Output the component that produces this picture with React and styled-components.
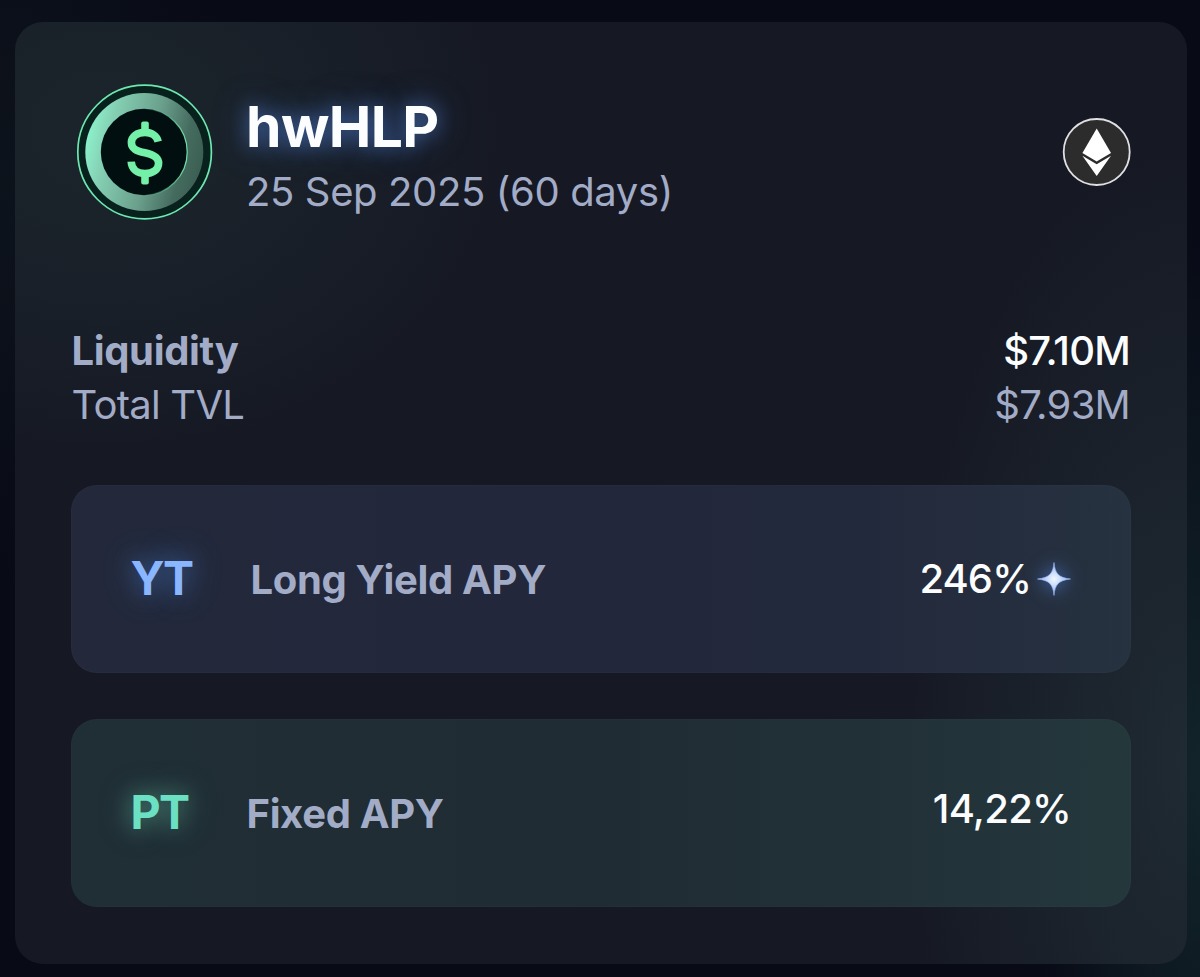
import React from "react";
import styled, { createGlobalStyle } from "styled-components";

const GlobalStyle = createGlobalStyle`
  *, *::before, *::after { box-sizing: border-box; }
  html, body { margin: 0; padding: 0; }
  body {
    background: #080b16;
    font-family: Inter, "Liberation Sans", sans-serif;
    -webkit-font-smoothing: antialiased;
  }
`;

const Page = styled.main`
  width: 1200px;
  height: 977px;
  padding: 22px 13px 13px 15px;
  overflow: hidden;
  background:
    radial-gradient(ellipse 170px 560px at 1200px 780px, rgba(28, 62, 62, 0.5), transparent 100%),
    radial-gradient(ellipse 260px 420px at 0 180px, rgba(24, 40, 40, 0.3), transparent 100%),
    #080a16;
`;

const Card = styled.section`
  display: flex;
  flex-direction: column;
  width: 1172px;
  height: 942px;
  padding: 62px 56px 57px;
  border-radius: 28px;
  background:
    radial-gradient(ellipse 400px 320px at 90px 110px, rgba(34, 52, 54, 0.42), rgba(34, 52, 54, 0.26) 50%, transparent 100%),
    radial-gradient(ellipse 280px 620px at 1172px 740px, rgba(44, 66, 70, 0.42), transparent 100%),
    #161924;
`;

const Header = styled.header`
  display: flex;
  align-items: flex-start;
  height: 240px;
  padding-left: 5px;
`;

const CoinIcon = styled.svg`
  flex: none;
  width: 138px;
  height: 138px;
  margin-top: -1px;
`;

const Heading = styled.div`
  flex: 1;
  display: flex;
  flex-direction: column;
  gap: 4px;
  margin-left: 32px;
  padding-top: 9px;
`;

const Title = styled.h1`
  margin: 0;
  font-size: 57px;
  line-height: 68px;
  font-weight: 750;
  letter-spacing: ${(p) => p.$tracking}px;
  color: #fbfdff;
  text-shadow: 0 0 18px rgba(84, 130, 210, 0.5), 0 0 32px rgba(76, 120, 205, 0.6);
`;

const Text = styled.span`
  margin: 0;
  font-size: 40px;
  line-height: 54px;
  font-weight: ${(p) => p.$weight || 400};
  letter-spacing: ${(p) => p.$tracking || 0}px;
  color: ${(p) => p.$color || "#a2acc7"};
  white-space: nowrap;
`;

const EthIcon = styled.svg`
  flex: none;
  width: 70px;
  height: 70px;
  margin-top: 33px;
  margin-right: -0.5px;
`;

const Stats = styled.dl`
  display: flex;
  flex-direction: column;
  margin: 0 1px 53px 0.5px;
`;

const StatRow = styled.div`
  display: flex;
  justify-content: space-between;
`;

const Rates = styled.div`
  display: flex;
  flex-direction: column;
  gap: 46px;
`;

const RateCard = styled.div`
  display: flex;
  align-items: center;
  height: 188px;
  padding: 0 60px;
  border-radius: 26px;
  background: ${(p) => p.$background};
  box-shadow: inset 0 0 0 1px rgba(80, 110, 110, 0.05);
`;

const Token = styled.strong`
  flex: none;
  width: ${(p) => p.$width}px;
  padding-bottom: 2px;
  margin-left: -0.5px;
  font-size: 46.5px;
  line-height: 56px;
  font-weight: 720;
  letter-spacing: ${(p) => p.$tracking}px;
  color: ${(p) => p.$color};
  text-shadow: 0 0 22px ${(p) => p.$glow}, 0 0 34px ${(p) => p.$glow};
`;

const RateLabel = styled(Text)`
  padding-top: 2px;
`;

const RateValue = styled.div`
  display: flex;
  align-items: center;
  margin-left: auto;
  padding-bottom: ${(p) => p.$lift || 0}px;
`;

const Star = styled.svg`
  width: 34px;
  height: 34px;
  margin-left: 6px;
  overflow: visible;
  filter: drop-shadow(0 0 9px rgba(90, 145, 250, 0.8));
`;

function Coin() {
  return (
    <CoinIcon viewBox="0 0 138 138" fill="none">
      <defs>
        <linearGradient id="coinRing" x1="10" y1="58" x2="126" y2="86" gradientUnits="userSpaceOnUse">
          <stop offset="0" stopColor="#8df0cb" />
          <stop offset="0.18" stopColor="#84cfb3" />
          <stop offset="0.55" stopColor="#6a9f8c" />
          <stop offset="0.82" stopColor="#456b5f" />
          <stop offset="1" stopColor="#3b5e52" />
        </linearGradient>
        <linearGradient id="coinEdge" x1="20" y1="69" x2="112" y2="69" gradientUnits="userSpaceOnUse">
          <stop offset="0.5" stopColor="#64d9a5" stopOpacity="0" />
          <stop offset="1" stopColor="#70e6b0" />
        </linearGradient>
      </defs>
      <circle cx="68.6" cy="69" r="66.8" fill="#08211d" stroke="#6ce8b1" strokeWidth="1.7" />
      <circle cx="68.3" cy="69" r="59" fill="url(#coinRing)" />
      <circle cx="68" cy="69" r="43.2" fill="#020f10" stroke="url(#coinEdge)" strokeWidth="1.2" />
      <path
        d="M82.2 58.6C80.8 53 75.6 49.4 69 49.4c-8 0-13.6 4.4-13.6 10.2 0 6.2 5 8.4 13.6 10.2 9 1.9 13.6 4.6 13.6 10.4 0 6.2-5.6 10.4-13.6 10.4-7.6 0-13.4-4.4-13.8-12"
        stroke="#74f0a8"
        strokeWidth="7.6"
      />
      <rect x="65.2" y="38.4" width="7.6" height="12" rx="2" fill="#74f0a8" />
      <rect x="65.2" y="89.5" width="7.6" height="12" rx="2" fill="#74f0a8" />
    </CoinIcon>
  );
}

function Ethereum() {
  return (
    <EthIcon viewBox="0 0 70 70">
      <circle cx="34.7" cy="35" r="33" fill="#2d2c2d" stroke="#dfe0e3" strokeWidth="1.8" />
      <path d="M34.7 11.5 49 36 34.7 44.5 20.4 36Z" fill="#fff" />
      <path d="M20.4 38.8 34.7 47.2l14.3-8.4L34.7 59Z" fill="#fff" />
    </EthIcon>
  );
}

function Sparkle() {
  return (
    <Star viewBox="0 0 34 34">
      <defs>
        <radialGradient id="spark">
          <stop offset="0" stopColor="#f0f6ff" />
          <stop offset="0.35" stopColor="#cfe0ff" />
          <stop offset="1" stopColor="#86abf4" />
        </radialGradient>
      </defs>
      <path
        d="M17 0.5C18 11 21 15.6 33.5 17 21 18.4 18 23 17 33.5 16 23 13 18.4 0.5 17 13 15.6 16 11 17 0.5Z"
        fill="url(#spark)"
        stroke="#9dbcf8"
        strokeWidth="0.6"
      />
    </Star>
  );
}

export default function App() {
  return (
    <>
      <GlobalStyle />
      <Page>
        <Card>
          <Header>
            <Coin />
            <Heading>
              <Title $tracking={-0.6}>hwHLP</Title>
              <Text $weight={430} $tracking={-0.37}>25 Sep 2025 (60 days)</Text>
            </Heading>
            <Ethereum />
          </Header>
          <Stats>
            <StatRow>
              <Text as="dt" $weight={700} $tracking={-0.35}>Liquidity</Text>
              <Text as="dd" $weight={500} $tracking={-0.75} $color="#fbfdff">$7.10M</Text>
            </StatRow>
            <StatRow>
              <Text as="dt" $weight={370} $tracking={-0.75}>Total TVL</Text>
              <Text as="dd" $weight={380} $tracking={-0.75}>$7.93M</Text>
            </StatRow>
          </Stats>
          <Rates>
            <RateCard $background="linear-gradient(90deg, #23293b 0%, #22273b 50%, #23293c 75%, #263240 100%)">
              <Token $width={120} $tracking={-2} $color="#8ab5ff" $glow="rgba(80, 135, 220, 0.48)">YT</Token>
              <RateLabel $weight={700} $tracking={-0.35}>Long Yield APY</RateLabel>
              <RateValue>
                <Text $weight={480} $tracking={-0.9} $color="#fbfdff">246%</Text>
                <Sparkle />
              </RateValue>
            </RateCard>
            <RateCard $background="linear-gradient(90deg, #202e35 0%, #202c34 50%, #213037 75%, #24383c 100%)">
              <Token $width={116} $tracking={-1.7} $color="#6be0c2" $glow="rgba(110, 205, 175, 0.44)">PT</Token>
              <RateLabel $weight={700} $tracking={-0.35}>Fixed APY</RateLabel>
              <RateValue $lift={8}>
                <Text $weight={480} $tracking={-0.75} $color="#fbfdff">14,22%</Text>
              </RateValue>
            </RateCard>
          </Rates>
        </Card>
      </Page>
    </>
  );
}
